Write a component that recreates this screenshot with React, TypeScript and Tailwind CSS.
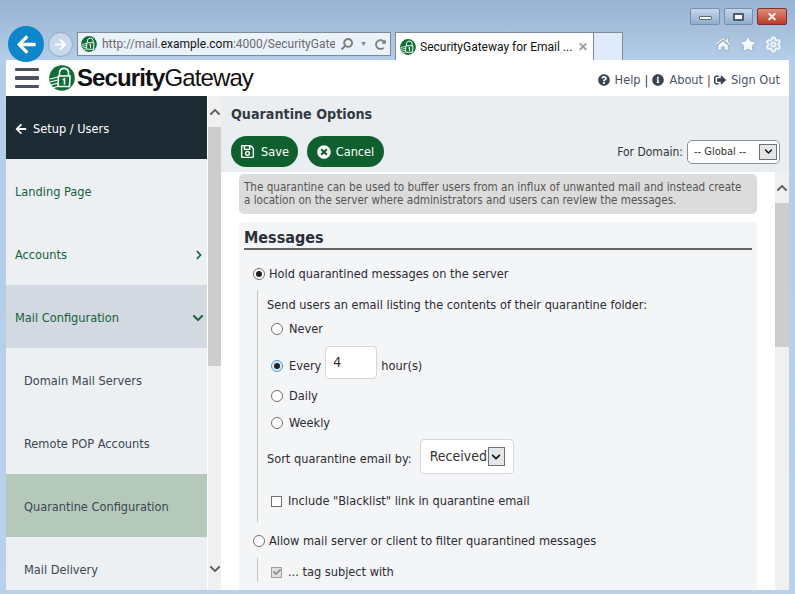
import React from 'react';
import { FaArrowLeft, FaChevronDown, FaChevronRight, FaChevronUp, FaHome, FaStar, FaQuestionCircle, FaInfoCircle, FaSignOutAlt, FaRegSave, FaTimesCircle, FaSearch, FaRedoAlt, FaCheck } from 'react-icons/fa';
import { Settings } from 'lucide-react';

const LogoMark: React.FC<{ size: number }> = ({ size }) => (
  <svg width={size} height={size} viewBox="0 0 26 26" className="shrink-0">
    <circle cx="13" cy="13" r="12.8" fill="#0f6e35" />
    <path d="M10.5 10.5V7a4.6 4.6 0 0 1 9 0v3.5" fill="none" stroke="#fff" strokeWidth="1.6" />
    <path d="M9.5 11h11.5l-.5 10.5H9z" fill="none" stroke="#fff" strokeWidth="1.6" />
    <path d="M15.5 13v6.5M13.5 14.5h2" fill="none" stroke="#fff" strokeWidth="1.6" />
    <path d="M1 14l8-2M1 17l8-2M2 20l7-2M4 23l5-2" fill="none" stroke="#fff" strokeWidth="1.2" />
  </svg>
);

const Radio: React.FC<{ checked?: boolean; focus?: boolean }> = ({ checked, focus }) => (
  <span className={`w-[12px] h-[12px] rounded-full border flex items-center justify-center shrink-0 ${focus ? 'border-[#4a9bd4] bg-[#dcecf8]' : 'border-[#707070] bg-white'}`}>
    {checked && <span className="w-[6px] h-[6px] rounded-full bg-[#222]" />}
  </span>
);

const OptionRow: React.FC<{ className?: string; gap?: string; control: React.ReactNode; children: React.ReactNode }> = ({ className = '', gap = 'gap-[6px]', control, children }) => (
  <div className={`flex items-center h-[20px] text-[12.67px] text-[#2b2b33] ${gap} ${className}`}>
    {control}
    <span className="whitespace-nowrap -mt-[1px]">{children}</span>
  </div>
);

const NavRow: React.FC<{ label: string; sub?: boolean; bg?: string; icon?: React.ReactNode }> = ({ label, sub, bg = '', icon }) => (
  <div className={`h-[63px] shrink-0 flex items-center justify-between pr-[3px] pt-[2px] text-[12.67px] ${sub ? 'pl-[18px] text-[#3b4650]' : 'pl-[9px] text-[#15603c]'} ${bg}`}>
    <span className="whitespace-nowrap">{label}</span>
    {icon}
  </div>
);

const ScrollBar: React.FC<{ width: string; thumbH: number }> = ({ width, thumbH }) => (
  <div className={`${width} shrink-0 bg-[#f0f0f0] flex flex-col`}>
    <div className="h-[31px] flex items-center justify-center shrink-0 text-[#606060]">
      <FaChevronUp size={12} />
    </div>
    <div className="bg-[#cdcdcd] shrink-0" style={{ height: thumbH }} />
  </div>
);

const WindowButton: React.FC<{ className: string; children: React.ReactNode }> = ({ className, children }) => (
  <div className={`h-[17px] rounded-[2px] border flex items-center justify-center ${className}`}>{children}</div>
);

export default function App() {
  return (
    <div className="w-[795px] h-[594px] overflow-hidden flex flex-col bg-gradient-to-b from-[#98b3d1] via-[#b4cde8] via-10% to-[#b9d1ea] [font-family:'DejaVu_Sans',sans-serif] [font-stretch:condensed]">
      {/* browser chrome */}
      <div className="h-[60px] shrink-0 flex flex-col [font-family:Roboto,sans-serif] [font-stretch:normal]">
        <div className="h-[32px] pt-[8px] pr-[8px] flex justify-end gap-[4px] shrink-0">
          <WindowButton className="w-[30px] border-[#7c8ea6] bg-gradient-to-b from-[#c5d8ec] to-[#8fadcd]">
            <span className="w-[13px] h-[4px] bg-white border border-[#5c6c80] rounded-[1px] mt-[3px]" />
          </WindowButton>
          <WindowButton className="w-[29px] border-[#7c8ea6] bg-gradient-to-b from-[#c5d8ec] to-[#8fadcd]">
            <span className="w-[11px] h-[8px] border-2 border-[#4c5c70] bg-white rounded-[1px]" />
          </WindowButton>
          <WindowButton className="w-[30px] border-[#7a3030] bg-gradient-to-b from-[#dc8a78] to-[#bd3a26] text-white">
            <span className="text-[12px] font-bold leading-none">✕</span>
          </WindowButton>
        </div>
        <div className="flex-1 flex items-start">
          <div className="relative z-10 -mt-[6px] ml-[8px] w-[36px] h-[36px] rounded-full bg-[#0e86c9] flex items-center justify-center text-white shrink-0">
            <FaArrowLeft size={21} />
          </div>
          <div className="ml-[4px] w-[25px] h-[25px] rounded-full border border-[#93a7bf] bg-[#c7d9ed] flex items-center justify-center text-white shrink-0">
            <FaArrowLeft size={13} className="rotate-180" />
          </div>
          <div className="ml-[4px] w-[314px] h-[24px] border border-[#7c8a9b] bg-[#eaf2fb] flex items-center pl-[3px] pr-[4px] shrink-0">
            <LogoMark size={16} />
            <div className="ml-[5px] w-[233px] overflow-hidden whitespace-nowrap text-[12px] text-[#6a6a6a]">
              http://mail.<span className="text-[#111]">example.com</span>:4000/SecurityGatew
            </div>
            <div className="flex-1 flex items-center justify-between text-[#7d7d7d] pl-[6px]">
              <FaSearch size={12} className="-scale-x-100" />
              <span className="text-[7px] mr-[1px]">▼</span>
              <FaRedoAlt size={11} />
            </div>
          </div>
          <div className="ml-[4px] w-[199px] h-[28px] bg-white border border-b-0 border-[#7c8a9b] flex items-center pl-[4px] pr-[5px] shrink-0">
            <LogoMark size={16} />
            <span className="ml-[4px] text-[12px] text-[#111] whitespace-nowrap flex-1">SecurityGateway for Email ...</span>
            <span className="text-[#999] text-[12px] font-bold">✕</span>
          </div>
          <div className="w-[29px] h-[28px] bg-[#dfeafa] border border-b-0 border-l-0 border-[#7c8a9b] shrink-0" />
          <div className="flex-1 flex items-center justify-end gap-[9px] pr-[13px] h-[24px] text-[#f4f7fb]">
            <FaHome size={16} stroke="#8a9bb0" strokeWidth={24} />
            <FaStar size={16} stroke="#8a9bb0" strokeWidth={24} />
            <Settings size={17} strokeWidth={2.6} />
          </div>
        </div>
      </div>

      {/* page */}
      <div className="ml-[6px] mr-[6px] mb-[4px] flex-1 min-h-0 flex flex-col bg-white">
        <div className="h-[36px] shrink-0 flex items-center">
          <div className="ml-[9px] w-[24px] flex flex-col gap-[5px]">
            <span className="h-[3.5px] bg-[#4a5261] rounded-[1px]" />
            <span className="h-[3.5px] bg-[#4a5261] rounded-[1px]" />
            <span className="h-[3.5px] bg-[#4a5261] rounded-[1px]" />
          </div>
          <div className="ml-[10px]">
            <LogoMark size={26} />
          </div>
          <div className="ml-[2px] text-[24px] tracking-[-0.9px] text-[#111] [font-family:'Liberation_Sans',sans-serif] [font-stretch:normal] whitespace-nowrap">
            <span className="font-bold">Security</span>Gateway
          </div>
          <div className="flex-1 flex items-center justify-end pr-[9px] pt-[3px] text-[12.67px] text-[#4a5360]">
            <FaQuestionCircle size={12} className="text-[#3a4450]" />
            <span className="ml-[5px]">Help</span>
            <span className="ml-[4px] text-[#333]">|</span>
            <FaInfoCircle size={12} className="ml-[4px] text-[#3a4450]" />
            <span className="ml-[5px]">About</span>
            <span className="ml-[4px] text-[#7a2a2a]">|</span>
            <FaSignOutAlt size={12} className="ml-[3px] text-[#3a4450]" />
            <span className="ml-[5px]">Sign Out</span>
          </div>
        </div>

        <div className="flex-1 min-h-0 flex">
          {/* sidebar */}
          <div className="w-[201px] shrink-0 bg-[#ecf0f3] flex flex-col overflow-hidden">
            <div className="h-[63px] shrink-0 bg-[#1d2b35] flex items-center pl-[9px] pt-[2px] text-[12.67px] text-white">
              <FaArrowLeft size={12} />
              <span className="ml-[6px]">Setup / Users</span>
            </div>
            <NavRow label="Landing Page" />
            <NavRow label="Accounts" icon={<FaChevronRight size={10} className="text-[#15603c]" />} />
            <NavRow label="Mail Configuration" bg="bg-[#d2d9e0]" icon={<FaChevronDown size={12} className="text-[#15603c]" />} />
            <NavRow label="Domain Mail Servers" sub />
            <NavRow label="Remote POP Accounts" sub />
            <NavRow label="Quarantine Configuration" sub bg="bg-[#b5c9bb]" />
            <NavRow label="Mail Delivery" sub />
          </div>
          <div className="w-px bg-white shrink-0" />
          <div className="relative flex bg-[#f0f0f0]">
            <ScrollBar width="w-[13px]" thumbH={239} />
            <div className="absolute left-0 right-0 bottom-[15px] flex justify-center text-[#606060]">
              <FaChevronDown size={12} />
            </div>
          </div>

          {/* main */}
          <div className="flex-1 min-w-0 flex flex-col">
            <div className="h-[76px] shrink-0 bg-[#ebeef1] pl-[10px] pr-[9px] flex flex-col">
              <h1 className="h-[36px] flex items-center pt-[1px] text-[14.2px] font-bold text-[#333a44]">Quarantine Options</h1>
              <div className="flex items-center mt-[4px]">
                <button className="h-[31px] w-[67px] rounded-full bg-[#10602f] text-white text-[12.67px] flex items-center justify-center gap-[6px]">
                  <FaRegSave size={15} />
                  Save
                </button>
                <button className="ml-[9px] h-[31px] w-[77px] rounded-full bg-[#10602f] text-white text-[12.67px] flex items-center justify-center gap-[5px]">
                  <FaTimesCircle size={14} />
                  Cancel
                </button>
                <span className="ml-auto text-[12px] text-[#333]">For Domain:</span>
                <div className="ml-[4px] w-[93px] h-[24px] rounded-[5px] border border-[#8a8f96] bg-white flex items-center justify-between pl-[6px] pr-[2px] text-[11px] text-[#333]">
                  <span className="pt-[2px]">-- Global --</span>
                  <span className="w-[18px] h-[16px] border border-[#707070] bg-[#e4e7ea] flex items-center justify-center text-[#111]">
                    <FaChevronDown size={9} />
                  </span>
                </div>
              </div>
            </div>

            <div className="flex-1 min-h-0 flex">
              <div className="flex-1 min-w-0 overflow-hidden pl-[18px] pr-[18px] pt-[2px]">
                <div className="h-[40px] rounded-[5px] bg-[#dcdcdc] px-[5px] pt-[7px] text-[11.6px] leading-[13px] text-[#555]">
                  <p className="whitespace-nowrap">The quarantine can be used to buffer users from an influx of unwanted mail and instead create</p>
                  <p className="whitespace-nowrap">a location on the server where administrators and users can review the messages.</p>
                </div>
                <div className="mt-[8px] rounded-[5px] bg-[#f4f5f7] px-[5px] pt-[5px] pb-[20px]">
                  <h2 className="h-[23px] border-b-2 border-[#666] text-[16px] leading-[21px] font-bold text-[#2b2f3a]">Messages</h2>
                  <OptionRow className="mt-[14px] ml-[9px]" gap="gap-[4px]" control={<Radio checked />}>Hold quarantined messages on the server</OptionRow>
                  <div className="mt-[6px] ml-[13px] border-l border-[#c4c4c4] pl-[9px] pt-[4px] pb-[11px]">
                    <div className="h-[20px] flex items-center text-[12.67px] text-[#2b2b33] whitespace-nowrap">Send users an email listing the contents of their quarantine folder:</div>
                    <OptionRow className="mt-[5px] ml-[4px]" control={<Radio />}>Never</OptionRow>
                    <div className="mt-[7px] ml-[4px] flex items-start">
                      <OptionRow className="mt-[10px]" control={<Radio checked focus />}>Every</OptionRow>
                      <div className="ml-[4px] w-[52px] h-[33px] rounded-[4px] border border-[#d4d6da] bg-white flex items-center pl-[7px] text-[14px] text-[#333]">4</div>
                      <span className="ml-[4px] mt-[9px] h-[20px] flex items-center text-[12.67px] text-[#2b2b33]">hour(s)</span>
                    </div>
                    <OptionRow className="mt-[7px] ml-[4px]" control={<Radio />}>Daily</OptionRow>
                    <OptionRow className="mt-[7px] ml-[4px]" control={<Radio />}>Weekly</OptionRow>
                    <div className="mt-[6px] flex items-center h-[35px]">
                      <span className="text-[12.67px] text-[#2b2b33] mt-[3px]">Sort quarantine email by:</span>
                      <div className="ml-[8px] w-[94px] h-[35px] rounded-[4px] border border-[#d4d6da] bg-white flex items-center pl-[9px] text-[14px] text-[#333]">
                        Received
                        <span className="ml-[1px] w-[17px] h-[19px] border border-[#707070] bg-[#e4e7ea] flex items-center justify-center text-[#111]">
                          <FaChevronDown size={10} />
                        </span>
                      </div>
                    </div>
                    <OptionRow className="mt-[17px] ml-[4px]" control={<span className="w-[11px] h-[11px] border border-[#707070] bg-white shrink-0" />}>Include "Blacklist" link in quarantine email</OptionRow>
                  </div>
                  <OptionRow className="mt-[9px] ml-[9px]" gap="gap-[4px]" control={<Radio />}>Allow mail server or client to filter quarantined messages</OptionRow>
                  <div className="mt-[7px] ml-[13px] border-l border-[#c4c4c4] pl-[9px] pt-[4px]">
                    <OptionRow className="ml-[4px]" control={<span className="w-[11px] h-[11px] border border-[#a0a0a0] bg-[#e0e0e0] flex items-center justify-center text-[#808080] shrink-0"><FaCheck size={8} /></span>}>... tag subject with</OptionRow>
                  </div>
                </div>
              </div>
              <ScrollBar width="w-[14px]" thumbH={144} />
            </div>
          </div>
        </div>
      </div>
    </div>
  );
}
